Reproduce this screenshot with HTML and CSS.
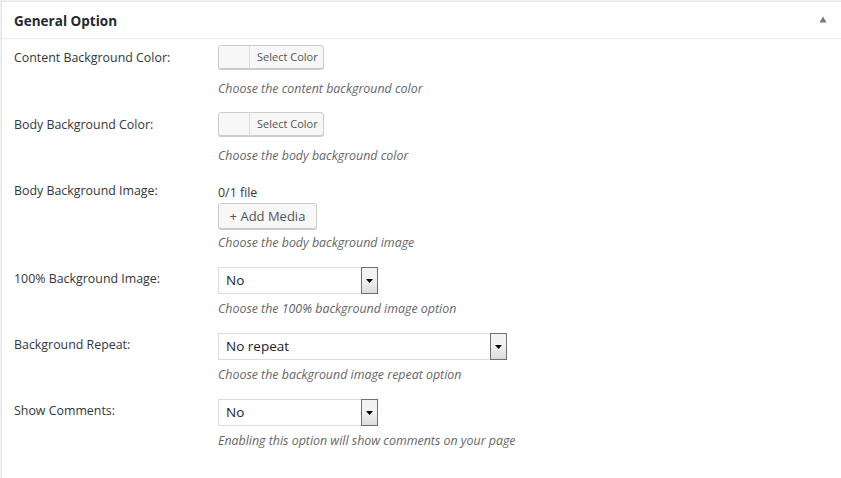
FILE: index.html
```html
<!DOCTYPE html>
<html>
<head>
<meta charset="utf-8">
<link rel="stylesheet" href="styles.css">
</head>
<body>
<div class="postbox">
  <div class="hndle">
    <h2 class="title">General Option</h2>
    <svg class="toggle" width="8" height="7" viewBox="0 0 8 7"><path d="M4 0.5 L7.5 6.5 L0.5 6.5 Z" fill="#72777c"/></svg>
  </div>
  <div class="inside">
    <div class="row">
      <div class="label">Content Background Color:</div>
      <div class="field">
        <div class="color-btn"><span class="swatch"></span><span class="color-text">Select Color</span></div>
        <p class="desc">Choose the content background color</p>
      </div>
    </div>
    <div class="row">
      <div class="label">Body Background Color:</div>
      <div class="field">
        <div class="color-btn"><span class="swatch"></span><span class="color-text">Select Color</span></div>
        <p class="desc">Choose the body background color</p>
      </div>
    </div>
    <div class="row row-media">
      <div class="label">Body Background Image:</div>
      <div class="field">
        <div class="file-count">0/1 file</div>
        <div class="media-btn">+ Add Media</div>
        <p class="desc">Choose the body background image</p>
      </div>
    </div>
    <div class="row">
      <div class="label">100% Background Image:</div>
      <div class="field">
        <div class="select"><span class="value">No</span><span class="arrow"><svg width="7" height="4" viewBox="0 0 7 4"><path d="M0 0 H7 L3.5 4 Z" fill="#000"/></svg></span></div>
        <p class="desc">Choose the 100% background image option</p>
      </div>
    </div>
    <div class="row">
      <div class="label">Background Repeat:</div>
      <div class="field">
        <div class="select select-wide"><span class="value">No repeat</span><span class="arrow"><svg width="7" height="4" viewBox="0 0 7 4"><path d="M0 0 H7 L3.5 4 Z" fill="#000"/></svg></span></div>
        <p class="desc">Choose the background image repeat option</p>
      </div>
    </div>
    <div class="row">
      <div class="label">Show Comments:</div>
      <div class="field">
        <div class="select"><span class="value">No</span><span class="arrow"><svg width="7" height="4" viewBox="0 0 7 4"><path d="M0 0 H7 L3.5 4 Z" fill="#000"/></svg></span></div>
        <p class="desc">Enabling this option will show comments on your page</p>
      </div>
    </div>
  </div>
</div>
</body>
</html>
```
FILE: styles.css
```css
html, body {
  margin: 0;
  padding: 0;
  background: #f1f1f1;
  height: 100%;
}
body {
  font-family: "Open Sans", "Noto Sans", sans-serif;
  font-size: 12.4px;
  color: #32373c;
  overflow: hidden;
}
.postbox {
  margin: 1px 0 0 1px;
  background: #fff;
  border-top: 1px solid #e5e5e5;
  border-left: 1px solid #e5e5e5;
  min-height: 480px;
}
.hndle {
  height: 36px;
  border-bottom: 1px solid #eee;
  display: flex;
  align-items: center;
  justify-content: space-between;
  padding: 0 14px 0 12px;
}
.title {
  margin: 0;
  font-size: 13.5px;
  font-weight: 700;
  color: #23282d;
  line-height: 18px;
  padding-top: 1px;
}
.toggle {
  display: block;
  margin-top: -1px;
}
.inside {
  padding: 6px 0 0 12px;
}
.row {
  display: flex;
  margin-bottom: 14px;
}
.label {
  width: 204px;
  flex: none;
  line-height: 18px;
  padding-top: 4px;
  color: #32373c;
}
.row-media .label {
  padding-top: 3px;
}
.field {
  display: flex;
  flex-direction: column;
  align-items: flex-start;
}
.color-btn {
  display: flex;
  height: 22px;
  border: 1px solid #ccc;
  border-radius: 3px;
  background: #f7f7f7;
  box-shadow: 0 1px 0 #ccc;
  margin-bottom: 6px;
  box-sizing: content-box;
}
.swatch {
  width: 30px;
  border-right: 1px solid #ddd;
  background: #f7f7f7;
  border-radius: 2px 0 0 2px;
}
.color-text {
  font-size: 11px;
  color: #555;
  line-height: 22px;
  padding: 0 5px 0 7px;
}
.desc {
  margin: 5px 0 0;
  line-height: 18px;
  font-style: italic;
  color: #666;
}
.file-count {
  line-height: 18px;
  padding-top: 5px;
  margin-bottom: 1px;
  color: #32373c;
}
.media-btn {
  height: 24px;
  line-height: 24px;
  padding: 0 10px;
  border: 1px solid #ccc;
  border-radius: 3px;
  background: #f7f7f7;
  box-shadow: 0 1px 0 #ccc;
  color: #555;
  font-size: 13px;
  width: 77px;
  text-align: center;
}
.select {
  display: flex;
  width: 158px;
  height: 25px;
  border: 1px solid #ddd;
  background: #fff;
  margin: 1px 0;
  box-sizing: content-box;
}
.select-wide {
  width: 287px;
}
.value {
  flex: 1;
  font-size: 13.5px;
  color: #222;
  line-height: 25px;
  padding-left: 7px;
}
.arrow {
  width: 15px;
  border: 1px solid #707070;
  background: linear-gradient(#f2f2f2, #f2f2f2 45%, #dcdcdc);
  display: flex;
  align-items: center;
  justify-content: center;
  margin: -1px -1px -1px 0;
}
.arrow svg {
  display: block;
}
```
